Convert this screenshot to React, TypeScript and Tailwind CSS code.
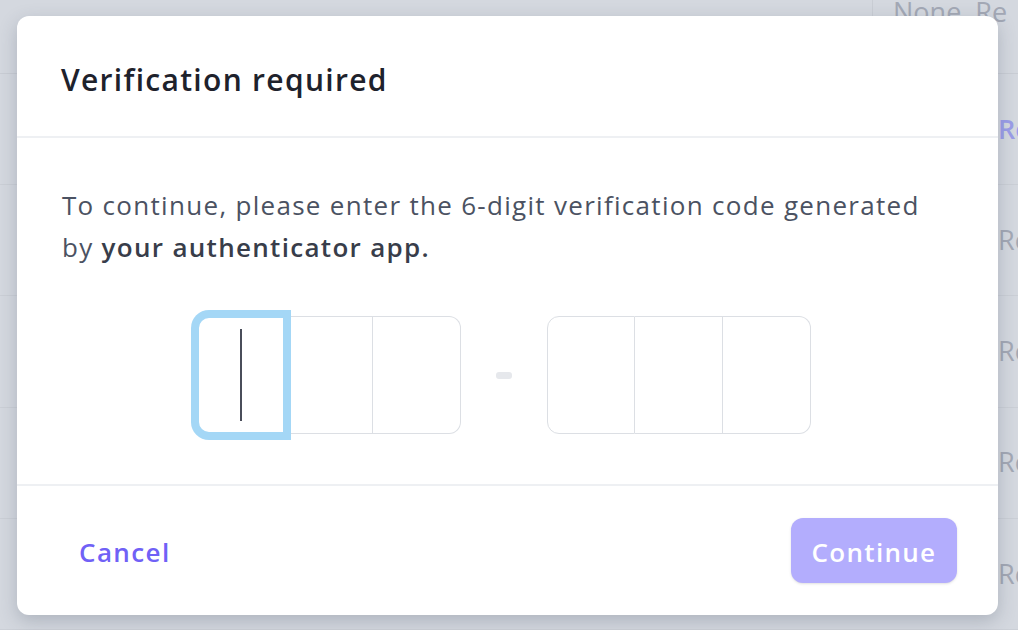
import React from "react";

const rows = [
  { text: "Re", color: "text-[#9b9de8] font-semibold" },
  { text: "Re", color: "text-[#a3a8b5]" },
  { text: "Re", color: "text-[#a3a8b5]" },
  { text: "Re", color: "text-[#a3a8b5]" },
  { text: "Re", color: "text-[#a3a8b5]" },
];

function Cell({ focused, last, first }: { focused?: boolean; last?: boolean; first?: boolean }) {
  if (focused) {
    return (
      <div className="relative z-10 flex h-[118px] w-[88px] items-center justify-center rounded-l-[12px] border-[2px] border-[#a4d7f6] ring-[6px] ring-[#a4d7f6] bg-white">
        <div className="h-[92px] w-[2px] bg-[#4a4d5a]" />
      </div>
    );
  }
  return (
    <div
      className={
        "h-[118px] w-[88px] bg-white border-[#dcdfe4] border-y " +
        (first ? "border-l rounded-l-[12px] " : "") +
        (last ? "border-r rounded-r-[12px] " : "border-r ")
      }
    />
  );
}

export default function App() {
  return (
    <div
      className="relative h-[630px] w-[1018px] overflow-hidden bg-[#d4d8df]"
      style={{ fontFamily: '"Open Sans", "Noto Sans", sans-serif' }}
    >
      {/* background table (dimmed) */}
      <div className="flex h-full flex-col">
        <div className="flex h-[75px] items-start border-b border-[#c9cdd4]">
          <div className="ml-[872px] h-full border-l border-[#c9cdd4]" />
          <div className="ml-[20px] -mt-[8px] text-[27px] text-[#a3a8b5]">None&nbsp;&nbsp;Re</div>
        </div>
        {rows.map((r, i) => (
          <div key={i} className="flex h-[113px] items-center border-b border-[#cbcfd6] pl-[998px]">
            <span className={"text-[27px] " + r.color}>{r.text}</span>
          </div>
        ))}
      </div>

      {/* modal */}
      <div className="absolute left-[17px] top-[16px] flex h-[599px] w-[981px] flex-col rounded-[12px] bg-white shadow-[0_6px_18px_rgba(60,70,90,0.25)]">
        <div className="flex h-[122px] items-center border-b-2 border-[#eef0f3] px-[44px] pt-[6px]">
          <h1 className="text-[30px] font-semibold tracking-[1.3px] text-[#1e222c]">Verification required</h1>
        </div>

        <div className="flex flex-1 flex-col px-[45px] pt-[46px]">
          <p className="text-[26px] leading-[42px] tracking-[1.3px] text-[#4b5262]">
            To continue, please enter the 6-digit verification code generated by{" "}
            <span className="font-semibold text-[#383d4a]">your authenticator app.</span>
          </p>

          <div className="mt-[48px] flex items-center justify-center pr-[7px]">
            <div className="flex">
              <Cell focused />
              <Cell />
              <Cell last />
            </div>
            <div className="mx-[35px] h-[7px] w-[16px] rounded-[3px] bg-[#e6e8ec]" />
            <div className="flex">
              <Cell first />
              <Cell />
              <Cell last />
            </div>
          </div>
        </div>

        <div className="flex h-[131px] items-center justify-between border-t-2 border-[#eef0f3] pl-[45px] pr-[41px]">
          <button className="px-[17px] pt-[4px] text-[26px] font-semibold tracking-[1.4px] text-[#7061f6]">Cancel</button>
          <button className="h-[65px] w-[166px] rounded-[12px] bg-[#b3adfd] pt-[3px] text-[26px] font-semibold tracking-[1.3px] text-white shadow-sm">
            Continue
          </button>
        </div>
      </div>
    </div>
  );
}
